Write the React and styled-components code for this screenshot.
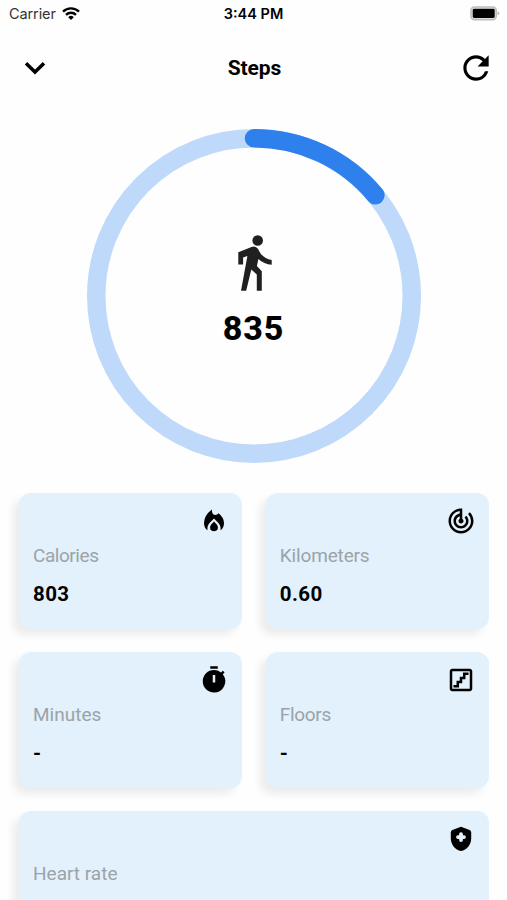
import React from 'react';
import styled, { createGlobalStyle } from 'styled-components';
import { MdOutlineStairs, MdRefresh, MdTimer, MdTrackChanges } from 'react-icons/md';

const stats = [
  { label: 'Calories', value: '803', icon: FlameIcon, spacing: -0.45 },
  { label: 'Kilometers', value: '0.60', icon: MdTrackChanges, spacing: -0.15 },
  { label: 'Minutes', value: '-', icon: MdTimer, spacing: 0 },
  { label: 'Floors', value: '-', icon: MdOutlineStairs, spacing: -0.3 },
  { label: 'Heart rate', icon: ShieldIcon, wide: true, spacing: 0 },
];

const RADIUS = 157.75;
const LENGTH = 2 * Math.PI * RADIUS;

function WalkIcon() {
  return (
    <svg width="34" height="56" viewBox="0 0 34 56" fill="#202020">
      <circle cx="19.7" cy="5.5" r="5.3" />
      <path d="M0.3 29.5V17.3L13.5 11.9Q17.6 10.6 19.9 13.8L22.4 18.2Q26.6 23.9 33.7 25V29.7Q26 29.4 20.4 24L18.9 31L23.8 36.2V55.8H18.8V39.6L13.3 34.6L8.2 55.8H3L9.4 20.9L5.1 22.6V29.5Z" />
    </svg>
  );
}

function FlameIcon({ size }) {
  return (
    <svg width={size} height={size} viewBox="0 0 30 30">
      <g transform="translate(5 3.5)">
        <path d="M7.9 0Q7.8 5.4 11 5.4Q13.5 5.5 14.5 3.7Q20 8 20 13.5Q20 18.4 16.5 20.8Q17.2 16.3 14 13L10 9.1L6 13Q2.8 16.3 3.5 20.8Q0 18.4 0 13.5Q0 6 7.9 0Z" />
        <path d="M10 12l3 3.2Q14.6 17.4 13.6 19.7Q12.5 21.7 10 21.7Q7.5 21.7 6.4 19.7Q5.4 17.4 7 15.2Z" />
      </g>
    </svg>
  );
}

function ShieldIcon({ size }) {
  return (
    <svg width={size} height={size} viewBox="0 0 30 30">
      <path d="M15 2.7L23.6 5.9Q25.2 6.6 25.2 8.4V14.2C25.2 20.7 20.8 25.8 15 27.1C9.2 25.8 4.8 20.7 4.8 14.2V8.4Q4.8 6.6 6.4 5.9Z" />
      <path d="M15 10.1v6M12 13.1h6" stroke="#e3f1fc" strokeWidth="3.8" strokeLinecap="round" />
    </svg>
  );
}

function StatusBar() {
  return (
    <StatusContainer>
      <Carrier>
        Carrier
        <svg width="18" height="13" viewBox="0 0 18 13">
          <g fill="none" stroke="#000" strokeWidth="2.4">
            <path d="M1 4.7a11.4 11.4 0 0 1 16 0" />
            <path d="M4 7.8a7.2 7.2 0 0 1 10 0" />
          </g>
          <path d="M9 13 6.2 10.2a4 4 0 0 1 5.6 0z" />
        </svg>
      </Carrier>
      <Time>3:44 PM</Time>
      <Battery width="30" height="15" viewBox="0 0 30 15">
        <rect x="1" y="1" width="25.2" height="12.6" rx="3.4" fill="#e8e8e8" stroke="#bcbcbc" strokeWidth="1.6" />
        <rect x="2.7" y="2.7" width="22" height="9.2" rx="1.4" />
        <path d="M27.6 5.2q3.2 2.2 0 4.4z" fill="#aaa" />
      </Battery>
    </StatusContainer>
  );
}

function StepsRing({ steps, progress }) {
  return (
    <Ring>
      <svg width="334" height="334" viewBox="0 0 334 334" fill="none" strokeWidth="18.5">
        <circle cx="167" cy="167" r={RADIUS} stroke="#bfd9fa" />
        <circle
          cx="167"
          cy="167"
          r={RADIUS}
          stroke="#2e80ec"
          strokeLinecap="round"
          strokeDasharray={`${LENGTH * progress} ${LENGTH}`}
          transform="rotate(-90 167 167)"
        />
      </svg>
      <RingContent>
        <WalkIcon />
        <StepCount>{steps}</StepCount>
      </RingContent>
    </Ring>
  );
}

function StatCard({ label, value, icon: Icon, wide, spacing }) {
  return (
    <Card $wide={wide}>
      <IconRow>
        <Icon size={30} />
      </IconRow>
      <Label $spacing={spacing}>{label}</Label>
      {value && <Value>{value}</Value>}
    </Card>
  );
}

function App() {
  return (
    <>
      <GlobalStyle />
      <Screen>
        <StatusBar />
        <Header>
          <IconButton aria-label="Close">
            <svg width="22" height="14" viewBox="0 0 22 14" fill="none" stroke="#000" strokeWidth="3.5">
              <path d="M2 2.2l9 8.8 9-8.8" />
            </svg>
          </IconButton>
          <Title>Steps</Title>
          <IconButton aria-label="Refresh">
            <MdRefresh size={38} />
          </IconButton>
        </Header>
        <StepsRing steps={835} progress={0.1397} />
        <StatGrid>
          {stats.map(stat => (
            <StatCard key={stat.label} {...stat} />
          ))}
        </StatGrid>
      </Screen>
    </>
  );
}

const GlobalStyle = createGlobalStyle`
  * {
    box-sizing: border-box;
  }

  body {
    margin: 0;
    background-color: #fff;
    overflow: hidden;
  }
`;

const Screen = styled.div`
  display: flex;
  flex-direction: column;
  height: 900px;
  overflow: hidden;
  background-color: #fefefe;
  color: #000;
  font-family: Roboto, 'Liberation Sans', sans-serif;
`;

const StatusContainer = styled.div`
  display: grid;
  grid-template-columns: 1fr auto 1fr;
  align-items: center;
  flex: none;
  height: 27px;
  padding: 0 7px 0 9px;
  font-family: Inter, 'Liberation Sans', sans-serif;
  font-size: 14.5px;
`;

const Carrier = styled.div`
  display: flex;
  align-items: center;
  gap: 6px;
  color: #333;
  letter-spacing: -0.1px;
`;

const Time = styled.div`
  margin-right: 2px;
  font-weight: 600;
  font-size: 14.5px;
`;

const Battery = styled.svg`
  justify-self: end;
`;

const Header = styled.header`
  display: flex;
  align-items: center;
  justify-content: space-between;
  flex: none;
  height: 81px;
  margin-bottom: 2px;
  padding: 0 10px 0 14px;
`;

const IconButton = styled.button`
  display: flex;
  align-items: center;
  justify-content: center;
  width: 42px;
  height: 42px;
  padding: 0;
  border: none;
  background: none;
  color: #000;
`;

const Title = styled.h1`
  margin: 0 2px 0 0;
  font-size: 21px;
  font-weight: 700;
  letter-spacing: -0.1px;
`;

const Ring = styled.section`
  display: grid;
  place-items: center;
  flex: none;
  width: 334px;
  height: 334px;
  margin: 19px auto 0;

  > * {
    grid-area: 1 / 1;
  }
`;

const RingContent = styled.div`
  display: flex;
  flex-direction: column;
  align-items: center;
  align-self: start;
  padding-top: 106px;

  svg {
    margin-left: 3px;
  }
`;

const StepCount = styled.div`
  margin-top: 17px;
  font-size: 34px;
  line-height: 40px;
  font-weight: 800;
  letter-spacing: 0.9px;
`;

const StatGrid = styled.main`
  display: grid;
  grid-template-columns: 1fr 1fr;
  grid-auto-rows: 136px;
  gap: 23px 24px;
  padding: 30px 18.5px 0 19px;
`;

const Card = styled.article`
  grid-column: ${({ $wide }) => ($wide ? 'span 2' : 'auto')};
  padding: 13px 13px 0 14px;
  border-radius: 12px;
  background-color: #e3f1fc;
  box-shadow: -6px 6px 8px rgba(0, 0, 0, 0.075);
`;

const IconRow = styled.div`
  display: flex;
  justify-content: flex-end;
  height: 30px;
`;

const Label = styled.div`
  margin-top: 8px;
  color: #9ba3a9;
  font-size: 19px;
  line-height: 24px;
  letter-spacing: ${({ $spacing }) => $spacing}px;
`;

const Value = styled.div`
  margin-top: 14px;
  font-size: 20.5px;
  line-height: 24px;
  font-weight: 700;
  letter-spacing: 0.4px;
`;

export default App;
